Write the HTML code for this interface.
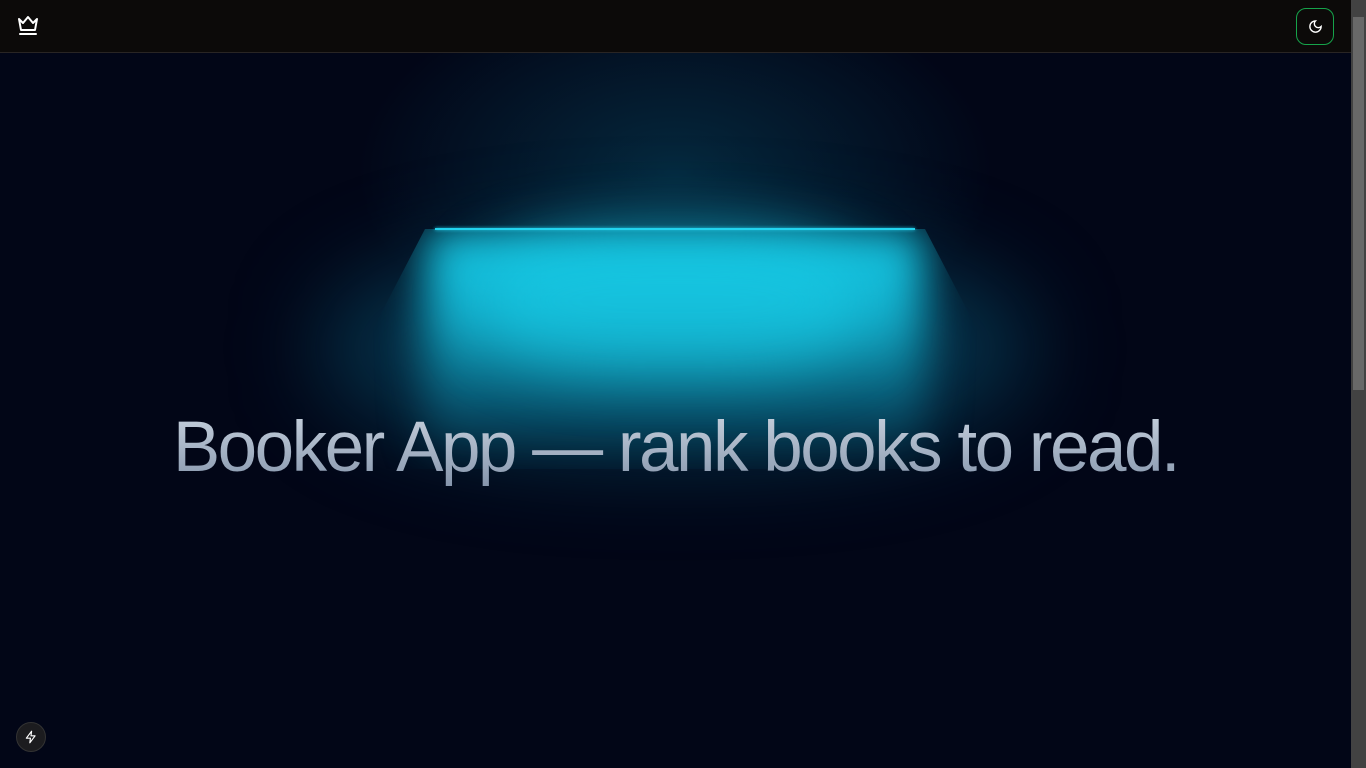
<!DOCTYPE html>
<html><head><style>
html,body{margin:0;padding:0;width:1366px;height:768px;overflow:hidden;background:#020617;font-family:"Liberation Sans",sans-serif}
.hdr{position:absolute;left:0;top:0;width:1351px;height:52px;background:#0c0a09;border-bottom:1px solid #292524;z-index:5}
.sb{position:absolute;right:0;top:0;width:15px;height:768px;background:#424242}
.th{position:absolute;left:2px;top:17px;width:11px;height:373px;background:#686868}
.main{position:absolute;left:0;top:53px;width:1351px;height:715px;background:#020617;overflow:hidden}
.g1{position:absolute;left:330px;top:-90px;width:690px;height:420px;border-radius:50%;background:radial-gradient(ellipse at center,rgba(8,75,100,.5),rgba(2,6,23,0) 65%)}
.wide{position:absolute;left:320px;top:185px;width:710px;height:220px;border-radius:45%;background:rgba(8,90,120,.5);filter:blur(45px)}
.cone{position:absolute;left:425px;top:176px;width:500px;height:240px;background:linear-gradient(rgba(22,200,228,1),rgba(20,185,215,.9) 35%,rgba(12,130,160,.55) 70%,rgba(10,100,130,0));clip-path:polygon(0 0,100% 0,125% 100%,-25% 100%);filter:blur(22px)}
.core{position:absolute;left:480px;top:178px;width:390px;height:140px;border-radius:40%;background:rgba(24,205,232,.6);filter:blur(30px)}
.line{position:absolute;left:435px;top:175px;width:480px;height:2px;background:#22d3ee;box-shadow:0 0 3px #22d3ee}
h1{position:absolute;left:0;width:1351px;top:354px;margin:0;text-align:center;font-weight:400;font-size:71px;letter-spacing:-2.5px;color:#94a3b8;background:linear-gradient(#cbd5e1,#8494ab);-webkit-background-clip:text;background-clip:text;-webkit-text-fill-color:transparent}
</style></head><body>
<div class="hdr">
<svg style="position:absolute;left:16px;top:15px" width="24" height="22" viewBox="0 0 24 22" fill="none" stroke="#fff" stroke-width="2" stroke-linejoin="round" stroke-linecap="round"><path d="M3 4l4 4 5-6 5 6 4-4-2 11H5z"/><path d="M4 19h16"/></svg>
<div style="position:absolute;left:1296px;top:8px;width:38px;height:37px;border:1px solid #16a34a;border-radius:10px;box-sizing:border-box"></div>
<svg style="position:absolute;left:1308px;top:19px" width="15" height="15" viewBox="0 0 24 24" fill="none" stroke="#fff" stroke-width="2.2" stroke-linecap="round"><path d="M12 3a6 6 0 0 0 9 9 9 9 0 1 1-9-9z"/></svg>
</div>
<div class="main">
<div class="g1"></div><div class="wide"></div><div class="cone"></div><div class="core"></div><div class="line"></div>
<h1>Booker App — rank books to read.</h1>
<div style="position:absolute;left:16px;top:669px;width:30px;height:30px;border-radius:50%;background:#1c1c1f;border:1px solid #333;box-sizing:border-box"></div>
<svg style="position:absolute;left:24px;top:677px" width="14" height="14" viewBox="0 0 24 24" fill="none" stroke="#fff" stroke-width="2" stroke-linejoin="round"><path d="M13 2L4 14h7l-1 8 9-12h-7z"/></svg>
</div>
<div class="sb"><div class="th"></div></div>
</body></html>
